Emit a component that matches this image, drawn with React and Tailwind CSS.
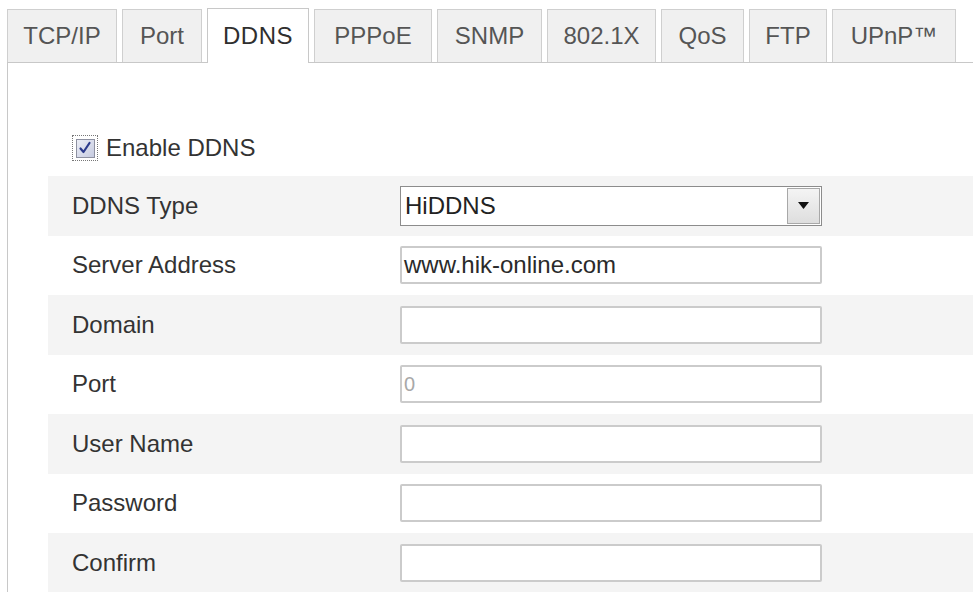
import React from 'react';

const tabs = [
  { label: 'TCP/IP', w: 'w-[110px]' },
  { label: 'Port', w: 'w-[80px]' },
  { label: 'DDNS', w: 'w-[102px]', active: true },
  { label: 'PPPoE', w: 'w-[118px]' },
  { label: 'SNMP', w: 'w-[105px]' },
  { label: '802.1X', w: 'w-[109px]' },
  { label: 'QoS', w: 'w-[83px]' },
  { label: 'FTP', w: 'w-[78px]' },
  { label: 'UPnP™', w: 'w-[124px]' },
];

const rows = [
  { label: 'DDNS Type', kind: 'select', value: 'HiDDNS' },
  { label: 'Server Address', value: 'www.hik-online.com' },
  { label: 'Domain', value: '' },
  { label: 'Port', value: '0', muted: true },
  { label: 'User Name', value: '' },
  { label: 'Password', value: '' },
  { label: 'Confirm', value: '' },
];

const Tab = ({ label, w, active }) => (
  <div
    className={
      active
        ? `${w} h-[55px] -mb-px flex items-center justify-center border border-b-0 border-[#c8c8c8] bg-white text-[#2f2f2f] tracking-[0.5px]`
        : `${w} h-[53px] flex items-center justify-center border border-b-0 border-[#cfcfcf] bg-[#f0f0f0] text-[#555]`
    }
  >
    {label}
  </div>
);

const Checkbox = () => (
  <span className="flex h-[26px] w-[26px] items-center justify-center border border-dotted border-[#777]">
    <span className="flex h-[19px] w-[19px] items-center justify-center border border-[#8d90a0] bg-gradient-to-br from-[#eceef6] to-[#c6cbe0]">
      <svg width="14" height="14" viewBox="0 0 14 14">
        <path d="M2.5 7.5 L5.5 11 L11.5 2" fill="none" stroke="#2c3b8c" strokeWidth="2.2" strokeLinecap="round" strokeLinejoin="round" />
      </svg>
    </span>
  </span>
);

const Field = ({ kind, value, muted }) => {
  if (kind === 'select') {
    return (
      <div className="flex h-[40px] w-[422px] border border-[#8c8c8c] bg-white">
        <div className="flex flex-1 items-center pl-[4px] text-[#222]">{value}</div>
        <div className="m-[1px] flex w-[33px] items-center justify-center border border-[#a8a8a8] bg-gradient-to-b from-[#f4f4f4] to-[#dedede]">
          <svg width="11" height="7" viewBox="0 0 11 7">
            <path d="M0 0 H11 L5.5 7 Z" fill="#111" />
          </svg>
        </div>
      </div>
    );
  }
  return (
    <div
      className={`flex h-[38px] w-[422px] items-center rounded-[2px] border-2 border-[#cbcbcb] bg-white pl-[2px] ${
        muted ? 'text-[#a8a8a8] text-[20px]' : 'text-[#2a2a2a]'
      }`}
    >
      {value}
    </div>
  );
};

export default function App() {
  return (
    <div className="flex h-[592px] w-[973px] flex-col overflow-hidden bg-white text-[24px] leading-none font-['Liberation_Sans',Arial,sans-serif]">
      <div className="ml-[7px] flex items-end gap-[5px] border-b border-[#c8c8c8] pt-[8px]">
        {tabs.map((t) => (
          <Tab key={t.label} {...t} />
        ))}
      </div>
      <div className="ml-[7px] flex flex-1 flex-col border-l border-[#c8c8c8] pt-[71px]">
        <div className="ml-[64px] flex h-[28px] items-center gap-[8px] text-[#333]">
          <Checkbox />
          <span>Enable DDNS</span>
        </div>
        <div className="ml-[40px] mt-[14px] flex flex-col">
          {rows.map((r, i) => (
            <div
              key={r.label}
              className={`flex h-[59.5px] shrink-0 items-center ${i % 2 === 0 ? 'bg-[#f4f4f4]' : 'bg-white'}`}
            >
              <div className="w-[352px] pl-[24px] text-[#333]">{r.label}</div>
              <Field {...r} />
            </div>
          ))}
        </div>
      </div>
    </div>
  );
}
